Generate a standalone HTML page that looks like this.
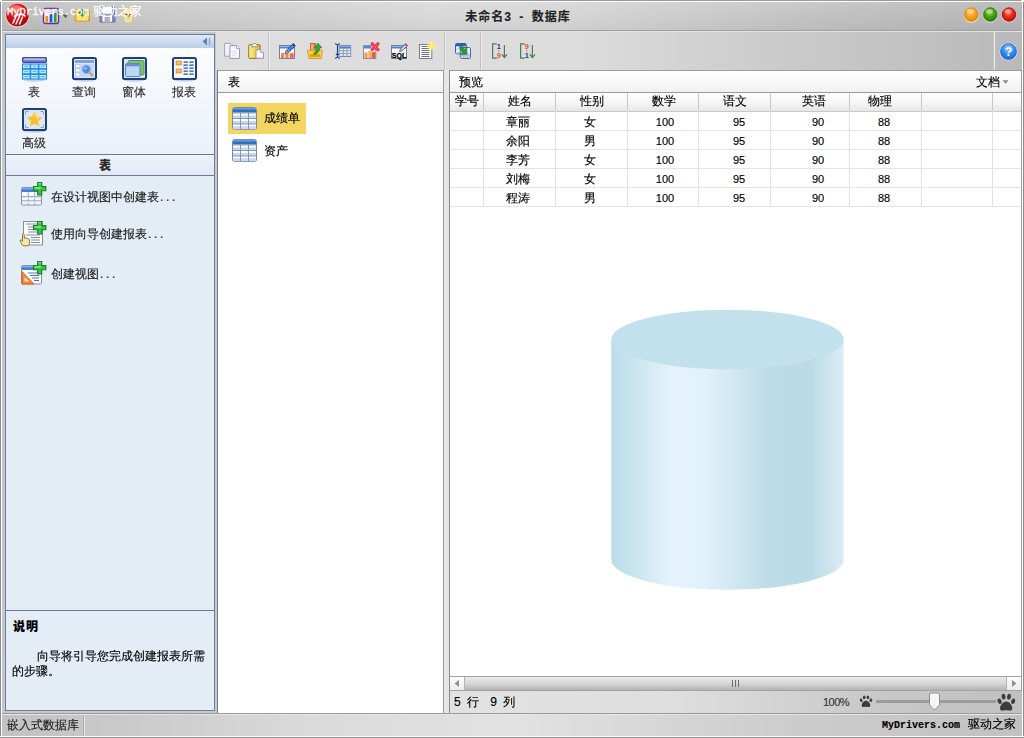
<!DOCTYPE html>
<html lang="zh-CN">
<head>
<meta charset="utf-8">
<title>未命名3 - 数据库</title>
<style>
*{box-sizing:border-box;margin:0;padding:0}
html,body{width:1024px;height:738px;overflow:hidden}
body{position:relative;background:#c4c8d0;font-family:"Liberation Sans","WenQuanYi Zen Hei","Noto Sans CJK SC",sans-serif;font-size:12px;color:#000;line-height:14px;-webkit-text-stroke:.15px currentColor}
.abs{position:absolute}
#titlebar{left:0;top:0;width:1024px;height:32px;background:linear-gradient(rgba(255,255,255,.12),rgba(255,255,255,0) 50%,rgba(0,0,0,.04)),linear-gradient(90deg,#bdbdbd 0,#cacaca 15%,#d9d9d9 42%,#d6d6d6 55%,#c2c2c2 80%,#b6b6b6 100%);border-bottom:1px solid #e4e4e4;box-shadow:inset 0 -1px 0 #9e9e9e}
#title{left:400px;top:8.500px;width:236px;text-align:center;font-weight:bold;font-size:12px;letter-spacing:1px;word-spacing:3px;white-space:pre;color:#222;font-family:"Liberation Sans","Noto Sans CJK SC",sans-serif;line-height:16px}
.tl{width:16px;height:16px;border-radius:50%;top:7px}
#frameL{left:0;top:0;width:2px;height:738px;background:#fff;border-left:1px solid #8c8c8c}
#frameR{left:1022px;top:0;width:2px;height:738px;background:#fff;border-right:1px solid #8c8c8c}
#frameT{left:0;top:0;width:1024px;height:2px;background:#fff;border-top:1px solid #9a9a9a}
#frameB{left:0;top:736px;width:1024px;height:2px;background:#fff;border-bottom:1px solid #8c8c8c}
#toolbar{left:216px;top:32px;width:806px;height:38px;background:linear-gradient(90deg,#dedede 0,#dcdcdc 45%,#cbcbcb 70%,#b9b9b9 100%)}
.tsep{top:32px;height:38px;background:#c2c2c2;border-right:1px solid #ececec;width:2px}
/* left panel */
#lp{left:5px;top:34px;width:210px;height:677px;border:1px solid #707c96;background:#e4edf6}
#lphead{left:0;top:0;width:208px;height:13px;background:linear-gradient(#dfe9f5,#b8cde7)}
#lpicons{left:0;top:13px;width:208px;height:106px;background:linear-gradient(#fbfcfe,#eaf1f9)}
.cat{width:50px;text-align:center;font-size:12px;color:#2e2e2e}
#lpsec{left:0;top:119px;width:208px;height:22px;border-top:1px solid #6c7892;border-bottom:1px solid #6c7892;background:linear-gradient(#eef3fa,#e1e9f5);font-weight:bold;line-height:20px;font-family:'Liberation Sans','Noto Sans CJK SC',sans-serif}
.task{font-size:12px;white-space:nowrap;color:#1a1a1a}
.dots{letter-spacing:2.700px;margin-left:1px}
#lpdesc{left:0;top:575px;width:208px;height:100px;border-top:1px solid #6c7892;background:#e4edf6}
/* middle panel */
#mp{left:217px;top:70px;width:227px;height:643px;background:#fff;border:1px solid #9c9c9c;border-left-color:#777b80;border-bottom:none}
#mphead{left:0;top:0;width:225px;height:22px;border-bottom:1px solid #9b9b9b;background:linear-gradient(#fff,#f1f1f1)}
#sel{left:10px;top:32px;width:78px;height:31px;background:#f3d660}
/* preview */
#pv{left:449px;top:70px;width:573px;height:643px;background:#fff;border:1px solid #9c9c9c;border-left-color:#85888c;border-bottom:none}
#pvhead{left:0;top:0;width:571px;height:22px;border-bottom:1px solid #9b9b9b;background:linear-gradient(#fff,#f1f1f1)}
#grid{left:0;top:22px;width:571px}
.hrow{left:0;top:0;width:571px;height:19px;background:linear-gradient(#fff 0,#f4f4f4 60%,#e6e6e6 100%);border-bottom:1px solid #c9c9c9}
.gl{background:#e2e2e2;width:1px}
.gh{top:0;width:1px;height:18px;background:#c9c9c9;z-index:2}
.hl{background:#e4e4e4;height:1px;left:0;width:571px}
.c{position:absolute;text-align:center;height:19px;line-height:19px;font-size:12px}
#status{left:0;top:713px;width:1024px;height:25px;background:linear-gradient(90deg,#c2c2c2 0,#c8c8c8 10%,#dadada 30%,#e2e2e2 50%,#cecece 75%,#c1c1c1 100%);border-top:1px solid #9a9a9a;box-shadow:inset 0 1px 0 #e6e6e6}
.wm{white-space:nowrap;height:16px;line-height:16px}
.wml{font-family:"Liberation Mono",monospace;font-size:12px;display:inline-block;transform-origin:0 50%;white-space:pre}
.wmc{font-size:12px}
.wmw{-webkit-text-stroke:.3px #fff}
.n{font-family:"Liberation Sans",sans-serif;font-size:11px}
#hsb{left:0;top:605px;width:571px;height:15px;background:#ececec;border-top:1px solid #a2a2a2;border-bottom:1px solid #a2a2a2}
.sbtn{top:0;width:14px;height:13px;background:linear-gradient(#fdfdfd,#ececec)}
#thumb{left:14px;top:0;width:543px;height:13px;background:linear-gradient(#ebebeb,#d6d6d6 50%,#b4b4b4);border-left:1px solid #b4b4b4;border-right:1px solid #b4b4b4}
#info{left:0;top:620px;width:572px;height:22px;background:linear-gradient(90deg,#e2e2e2,#dedede 40%,#c8c8c8 75%,#c0c0c0)}
</style>
</head>
<body>

<div id="titlebar" class="abs"></div>
<div id="title" class="abs">未命名3 - 数据库</div>
<!-- app logo -->
<svg class="abs" style="left:4px;top:1px" width="28" height="28" viewBox="0 0 28 28">
  <defs>
    <radialGradient id="lg1" cx="45%" cy="30%" r="70%"><stop offset="0" stop-color="#ff5a4a"/><stop offset=".45" stop-color="#e0141c"/><stop offset="1" stop-color="#a8060c"/></radialGradient>
  </defs>
  <circle cx="13.5" cy="14.5" r="12.2" fill="#f4d6d2" opacity=".7"/>
  <circle cx="13.5" cy="14" r="11.3" fill="url(#lg1)"/>
  <ellipse cx="11.5" cy="7.5" rx="6.5" ry="3.6" fill="#ff9a8a" opacity=".55"/>
  <path d="M9 22 L13 13 M12 23 L16 14 M15.5 23 L18.5 16 M10.5 15 L17 12.5 L21 15" stroke="#fff" stroke-width="1.5" fill="none" stroke-linecap="round"/>
</svg>
<!-- chart icon -->
<svg class="abs" style="left:42px;top:7px" width="18" height="18" viewBox="0 0 18 18">
  <rect x="1.5" y="1.5" width="15" height="15" rx="2" fill="#f3eef7" stroke="#6b2d8c" stroke-width="1.4"/>
  <rect x="3" y="3" width="12" height="3" fill="#d9c7e6"/>
  <rect x="3.5" y="9" width="2.6" height="6.5" fill="#ef8a1d"/>
  <rect x="7.6" y="7" width="2.8" height="8.5" fill="#2a55d8"/>
  <rect x="11.8" y="6" width="2.8" height="9.5" fill="#25a03c"/>
</svg>
<svg class="abs" style="left:62px;top:14px" width="7" height="5" viewBox="0 0 7 5"><path d="M0.5 0.5h6L3.5 4z" fill="#55624a"/></svg>
<!-- folder -->
<svg class="abs" style="left:74px;top:6px" width="17" height="17" viewBox="0 0 17 17">
  <path d="M1 3.5h5l1.2 1.5H15.5v10H1z" fill="#f6c53a" stroke="#d89a16" stroke-width="1"/>
  <path d="M1.5 7h14l-1.2 8H2.5z" fill="#fbe27a" stroke="#e0a820" stroke-width=".8"/>
  <path d="M6.5 3.5h4v3h2.2L8.5 10.5 4.3 6.5h2.2z" fill="#2f9a2f" stroke="#1c6e1c" stroke-width=".6"/>
</svg>
<!-- save -->
<svg class="abs" style="left:99px;top:5px" width="17" height="18" viewBox="0 0 17 18">
  <path d="M1 1.5h13.5l1.5 1.5v14H1z" fill="#8b89c4" stroke="#6c6aa8" stroke-width="1"/>
  <rect x="3.5" y="1.8" width="9.5" height="6.6" fill="#fff"/>
  <rect x="3.5" y="10.6" width="9.5" height="6" fill="#fff"/>
  <rect x="6" y="12.4" width="4.5" height="3.6" fill="#b9b9c9" stroke="#8a8aa0" stroke-width=".6"/>
</svg>
<!-- customize -->
<svg class="abs" style="left:123px;top:7px" width="11" height="17" viewBox="0 0 11 17">
  <rect x=".8" y=".8" width="9" height="15.2" rx="4.5" fill="#f4ecb4" stroke="#d8c66a" stroke-width="1"/>
  <path d="M2.6 7.2l2.7 2.3 2.7-2.3" stroke="#6a3d1a" stroke-width="1.6" fill="none"/>
  <path d="M2.6 10.6l2.7 2.3 2.7-2.3" stroke="#e2d27e" stroke-width="1.2" fill="none"/>
</svg>
<div class="abs wm wmw" style="left:6.500px;top:3px;color:#fff"><span class="wml" style="transform:scaleX(.955);width:87px;font-size:11px">MyDrivers.com </span><span class="wmc">驱动之家</span></div>
<!-- traffic lights -->
<svg class="abs" style="left:961px;top:5px" width="58" height="20" viewBox="0 0 58 20">
  <defs>
    <radialGradient id="tlo" cx="45%" cy="35%" r="65%"><stop offset="0" stop-color="#ffd27a"/><stop offset=".5" stop-color="#fba21c"/><stop offset="1" stop-color="#e58406"/></radialGradient>
    <radialGradient id="tlg" cx="45%" cy="35%" r="65%"><stop offset="0" stop-color="#a6e05a"/><stop offset=".5" stop-color="#46a412"/><stop offset="1" stop-color="#2c7d08"/></radialGradient>
    <radialGradient id="tlr" cx="45%" cy="35%" r="65%"><stop offset="0" stop-color="#ff8a7a"/><stop offset=".5" stop-color="#ee2a1c"/><stop offset="1" stop-color="#c40c08"/></radialGradient>
  </defs>
  <circle cx="10.300" cy="10.200" r="7.700" fill="#f6dcb4" opacity=".8"/><circle cx="10.300" cy="9.500" r="6.700" fill="url(#tlo)" stroke="#c98222" stroke-width=".9"/><ellipse cx="9.300" cy="6.300" rx="3.600" ry="2.200" fill="#fff" opacity=".35"/>
  <circle cx="29.300" cy="10.200" r="7.700" fill="#cfe0bc" opacity=".8"/><circle cx="29.300" cy="9.500" r="6.700" fill="url(#tlg)" stroke="#35701a" stroke-width=".9"/><ellipse cx="28.300" cy="6.300" rx="3.600" ry="2.200" fill="#fff" opacity=".35"/>
  <circle cx="48" cy="10.200" r="7.700" fill="#f2c4be" opacity=".8"/><circle cx="48" cy="9.500" r="6.700" fill="url(#tlr)" stroke="#8e1c12" stroke-width=".9"/><ellipse cx="47" cy="6.300" rx="3.600" ry="2.200" fill="#fff" opacity=".35"/>
</svg>
<div id="toolbar" class="abs"></div>
<div class="abs tsep" style="left:268px"></div>
<div class="abs tsep" style="left:444px"></div>
<div class="abs tsep" style="left:480px"></div>
<div class="abs tsep" style="left:993px"></div>
<svg class="abs" style="left:224px;top:43px;overflow:visible" width="16" height="16" viewBox="0 0 16 16"><path d="M.6 .4h6.200l1.400 1.400v11.400H.6z" fill="#f1f1fa" stroke="#a3a3c0" stroke-width="1"/><path d="M5.900 2.600h6.600l3 3v9.800H5.900z" fill="#f8f8fd" stroke="#9898b8" stroke-width="1"/><path d="M12.500 2.600v3h3" fill="#fff" stroke="#9898b8" stroke-width=".9"/><path d="M8 9l4-1.500M8 11l5-1.500M8 13l4-1" stroke="#dcdcea" stroke-width="1"/></svg>
<svg class="abs" style="left:248px;top:43px;overflow:visible" width="16" height="16" viewBox="0 0 16 16"><defs><linearGradient id="pg" x1="0" x2="1"><stop offset="0" stop-color="#fbf0a0"/><stop offset=".6" stop-color="#f2d040"/><stop offset="1" stop-color="#e0b020"/></linearGradient></defs><rect x=".7" y="1.600" width="11.500" height="13.800" rx="1.300" fill="url(#pg)" stroke="#8f7c22" stroke-width="1"/><path d="M3.600 3.800c0-2 1-3.400 2.900-3.400s2.900 1.400 2.900 3.400z" fill="#efeff4" stroke="#8a8a9c" stroke-width=".9"/><path d="M8 6.800h4.800l2.700 2.700v5.800H8z" fill="#f8f8fd" stroke="#9494b4" stroke-width="1"/><path d="M12.800 6.800v2.700h2.700" fill="#fff" stroke="#9494b4" stroke-width=".9"/></svg>
<svg class="abs" style="left:279px;top:43px;overflow:visible" width="16" height="16" viewBox="0 0 16 16"><rect x=".5" y="2.500" width="15" height="13" fill="#fff" stroke="#70809e" stroke-width="1"/><rect x="1" y="3" width="14" height="2.500" fill="#4a86d8"/><rect x="1" y="3" width="14" height="1" fill="#86b6ee"/><rect x="2" y="9.800" width="3.200" height="5.400" fill="#f0805a"/><rect x="6.400" y="11" width="3.200" height="4.200" fill="#f0805a"/><rect x="10.800" y="9.800" width="3.800" height="5.400" fill="#ee6a4a"/><rect x="2" y="9.800" width="12.600" height="1" fill="#f7b49a" opacity=".6"/><path d="M6.300 10.600l.9-3 7-7 2.100 2.100-7 7z" fill="#3f8ce6" stroke="#23458e" stroke-width=".9"/><path d="M8.300 6.500l1.900 1.900" stroke="#9fd0ff" stroke-width=".8"/><path d="M13.300 1.500l2.100 2.100 .9-.9-2.100-2.100z" fill="#3a2a52"/><path d="M6.300 10.600l.9-3 2.100 2.100z" fill="#f4e4b0" stroke="#6a4a2a" stroke-width=".6"/></svg>
<svg class="abs" style="left:307px;top:43px;overflow:visible" width="16" height="16" viewBox="0 0 16 16"><rect x="3.600" y=".5" width="4.700" height="7.500" fill="#f08a62" stroke="#d0583a" stroke-width="1"/><rect x="4.300" y="1.200" width="1.400" height="6" fill="#f9c0a6"/><path d="M.4 7.300h15.200l-1.400 8.200H1.900z" fill="#f8d23a" stroke="#e8943a" stroke-width="1"/><rect x="3" y="11.200" width="10" height="2.600" fill="#d8a210"/><path d="M11 .2l3.800 4.600h-2.300c0 3.300-1.700 5.400-4.600 6.900l-1.400-1.500c2.300-1.200 3.200-2.800 3.200-5.400H7.300z" fill="#2fb02f" stroke="#1c7a1c" stroke-width=".7"/></svg>
<svg class="abs" style="left:335px;top:43px;overflow:visible" width="16" height="16" viewBox="0 0 16 16"><rect x="4.300" y="2.500" width="11.400" height="11" fill="#f2f6fc" stroke="#808aa4" stroke-width="1"/><rect x="4.800" y="3" width="10.400" height="2.600" fill="#3f80d4"/><rect x="4.800" y="3" width="10.400" height="1" fill="#7fb2ee"/><rect x="4.800" y="8" width="10.400" height="2" fill="#dbe6f6"/><rect x="4.800" y="11.300" width="10.400" height="1.700" fill="#dbe6f6"/><path d="M4.800 7.600h10.400M4.800 10.600h10.400M8.300 5.600v7.900M11.900 5.600v7.900" stroke="#8c94aa" stroke-width=".9"/><path d="M.2 .6l2.300 1.300L4.800 .6M.2 15.400l2.300-1.300 2.300 1.300M2.500 1.900v12.200M.8 11.300h3.400" stroke="#23408c" stroke-width="1.200" fill="none"/></svg>
<svg class="abs" style="left:363px;top:43px;overflow:visible" width="16" height="16" viewBox="0 0 16 16"><rect x=".5" y="2.600" width="12.300" height="12.900" fill="#fff" stroke="#808aa4" stroke-width="1"/><rect x="1" y="3.100" width="7.500" height="2.400" fill="#4a86d8"/><rect x="1.400" y="9.500" width="3" height="5.600" fill="#f4923a"/><rect x="4.900" y="7.800" width="3" height="7.300" fill="#f7a64a"/><rect x="8.600" y="9" width="3.700" height="6.100" fill="#ee5a3a"/><rect x="1.400" y="9.500" width="1" height="5.600" fill="#fbc890"/><rect x="4.900" y="7.800" width="1" height="7.300" fill="#fcd6a0"/><path d="M9.200 .8l5.800 5.800M15 .8L9.200 6.600" stroke="#ee2e42" stroke-width="3.200" stroke-linecap="round"/><path d="M9.200 .8l5.800 5.800M15 .8L9.200 6.600" stroke="#f86a72" stroke-width="1" stroke-linecap="round"/></svg>
<svg class="abs" style="left:391px;top:43px;overflow:visible" width="16" height="16" viewBox="0 0 16 16"><rect x=".5" y="2.500" width="15" height="13" fill="#fff" stroke="#70809e" stroke-width="1"/><rect x="1" y="3" width="14" height="2.500" fill="#4a86d8"/><rect x="1" y="3" width="14" height="1" fill="#86b6ee"/><text x=".8" y="15" font-family="Liberation Sans,sans-serif" font-weight="bold" font-size="7" fill="#000" stroke="#000" stroke-width=".3" textLength="14.400" lengthAdjust="spacingAndGlyphs">SQL</text><path d="M8.800 8.300l.8-2.600 5-5 1.800 1.800-5 5z" fill="#cfdcf2" stroke="#34448a" stroke-width=".8"/><path d="M13.800 1.500l1.800 1.800 .8-.8L14.600 .7z" fill="#c8283a"/><path d="M8.800 8.300l.8-2.600 1.800 1.800z" fill="#f4e4b0" stroke="#5a4a3a" stroke-width=".5"/></svg>
<svg class="abs" style="left:419px;top:43px;overflow:visible" width="16" height="16" viewBox="0 0 16 16"><rect x=".5" y="1.500" width="12.300" height="14" fill="#fbfbfb" stroke="#7c7c88" stroke-width="1"/><path d="M2.500 3.500h8M2.500 5.500h8M2.500 7.500h8M2.500 9.500h8M2.500 11.500h8M2.500 13.500h8" stroke="#70707c" stroke-width="1"/><circle cx="12.300" cy="3" r="4.300" fill="#fff27a" opacity=".55"/><circle cx="12.300" cy="3" r="2.600" fill="#ffea30" opacity=".9"/><path d="M12.300 -.8v7.600M8.500 3h7.600" stroke="#fff6a0" stroke-width=".8" opacity=".9"/></svg>
<svg class="abs" style="left:455px;top:43px;overflow:visible" width="16" height="16" viewBox="0 0 16 16"><rect x=".5" y=".5" width="10.800" height="10.300" rx="1.200" fill="#eef4fc" stroke="#3a5aa6" stroke-width="1"/><rect x="1" y="1" width="9.800" height="2.400" fill="#2f5fb4"/><rect x="1" y="5.200" width="9.800" height="1.800" fill="#c2d8f2"/><rect x="1" y="8.600" width="9.800" height="1.700" fill="#c2d8f2"/><rect x="5.300" y="4.500" width="10.200" height="11" rx="1.200" fill="#e8eef9" stroke="#5a62ac" stroke-width="1"/><rect x="5.800" y="10.400" width="9.200" height="1.800" fill="#c6d6f0"/><rect x="5.800" y="13.600" width="9.200" height="1.400" fill="#c6d6f0"/><path d="M8.800 9.500v6M12.200 9.500v6M5.800 12.800h9.200" stroke="#98a4cc" stroke-width=".8"/><path d="M4.300 4.400l2.200-1.600 3.400 3.600 1.900-1.800v6.700H5.300l2-2z" fill="#1fa030" stroke="#0c6c1c" stroke-width=".6"/></svg>
<svg class="abs" style="left:491px;top:43px;overflow:visible" width="16" height="16" viewBox="0 0 16 16"><path d="M5.800 .9H1.600v14.300h4.200" fill="none" stroke="#4c7c5c" stroke-width="1.200"/><text x="5.700" y="6" font-family="Liberation Sans,sans-serif" font-weight="bold" font-size="7.400" fill="#2a3f8a">1</text><text x="5.700" y="15.400" font-family="Liberation Sans,sans-serif" font-weight="bold" font-size="7.400" fill="#e2562a">9</text><rect x="7.200" y="7.200" width="1.100" height="1.200" fill="#8c6c5c"/><path d="M13.400 2v12.300M10.800 11.300l2.600 3.200 2.600-3.200" fill="none" stroke="#4c7c5c" stroke-width="1.200"/></svg>
<svg class="abs" style="left:519px;top:43px;overflow:visible" width="16" height="16" viewBox="0 0 16 16"><path d="M5.800 .9H1.600v14.300h4.200" fill="none" stroke="#4c7c5c" stroke-width="1.200"/><text x="5.700" y="6" font-family="Liberation Sans,sans-serif" font-weight="bold" font-size="7.400" fill="#e2562a">9</text><text x="5.700" y="15.400" font-family="Liberation Sans,sans-serif" font-weight="bold" font-size="7.400" fill="#2a3f8a">1</text><rect x="7.200" y="7.200" width="1.100" height="1.200" fill="#8c6c5c"/><path d="M13.400 2v12.300M10.800 11.300l2.600 3.200 2.600-3.200" fill="none" stroke="#4c7c5c" stroke-width="1.200"/></svg>
<svg class="abs" style="left:999px;top:42px" width="19" height="19" viewBox="0 0 19 19"><defs><radialGradient id="hg" cx="50%" cy="30%" r="75%"><stop offset="0" stop-color="#8fd0ff"/><stop offset=".55" stop-color="#2f86ea"/><stop offset="1" stop-color="#1a5ac8"/></radialGradient></defs><circle cx="9.500" cy="9.500" r="9" fill="#dcecff"/><circle cx="9.500" cy="9.500" r="8" fill="url(#hg)" stroke="#2a6ad0" stroke-width=".8"/><text x="9.500" y="14" text-anchor="middle" font-family="Liberation Sans,sans-serif" font-weight="bold" font-size="12.500" fill="#fff">?</text></svg>
<div id="lp" class="abs">
  <div id="lphead" class="abs"></div>
  <div id="lpicons" class="abs"></div>
<svg class="abs" style="left:196px;top:2px" width="9" height="9" viewBox="0 0 9 9"><path d="M5 .5v8L.5 4.500z" fill="#5f7fae"/><path d="M7.500 .8v7.400" stroke="#8fa6c8" stroke-width="1.400"/></svg>
<svg class="abs" style="left:15px;top:20px" width="27" height="27" viewBox="-1 -1 27 27"><ellipse cx="12.500" cy="24.300" rx="10.500" ry="1.500" fill="#8ea6d0" opacity=".5"/><rect x=".600" y="1.600" width="23.800" height="4.800" rx="1" fill="#7a84d4" stroke="#3f49a2" stroke-width="1.200"/><rect x="2" y="2.500" width="21" height="1.300" fill="#c5ccf2"/><rect x="0.5" y="8.0" width="7.600" height="4.600" fill="#c4ebfc" stroke="#1f8ae4" stroke-width="1.100"/><rect x="2.3" y="9.6" width="4" height="1.200" fill="#58b4ee"/><rect x="8.7" y="8.0" width="7.600" height="4.600" fill="#c4ebfc" stroke="#1f8ae4" stroke-width="1.100"/><rect x="10.5" y="9.6" width="4" height="1.200" fill="#58b4ee"/><rect x="16.9" y="8.0" width="7.600" height="4.600" fill="#c4ebfc" stroke="#1f8ae4" stroke-width="1.100"/><rect x="18.7" y="9.6" width="4" height="1.200" fill="#58b4ee"/><rect x="0.5" y="13.2" width="7.600" height="4.600" fill="#c4ebfc" stroke="#1f8ae4" stroke-width="1.100"/><rect x="2.3" y="14.8" width="4" height="1.200" fill="#58b4ee"/><rect x="8.7" y="13.2" width="7.600" height="4.600" fill="#c4ebfc" stroke="#1f8ae4" stroke-width="1.100"/><rect x="10.5" y="14.8" width="4" height="1.200" fill="#58b4ee"/><rect x="16.9" y="13.2" width="7.600" height="4.600" fill="#c4ebfc" stroke="#1f8ae4" stroke-width="1.100"/><rect x="18.7" y="14.8" width="4" height="1.200" fill="#58b4ee"/><rect x="0.5" y="18.4" width="7.600" height="4.600" fill="#c4ebfc" stroke="#1f8ae4" stroke-width="1.100"/><rect x="2.3" y="20.0" width="4" height="1.200" fill="#58b4ee"/><rect x="8.7" y="18.4" width="7.600" height="4.600" fill="#c4ebfc" stroke="#1f8ae4" stroke-width="1.100"/><rect x="10.5" y="20.0" width="4" height="1.200" fill="#58b4ee"/><rect x="16.9" y="18.4" width="7.600" height="4.600" fill="#c4ebfc" stroke="#1f8ae4" stroke-width="1.100"/><rect x="18.7" y="20.0" width="4" height="1.200" fill="#58b4ee"/></svg>
<svg class="abs" style="left:65px;top:20px" width="27" height="27" viewBox="-1 -1 27 27"><ellipse cx="12.500" cy="24.300" rx="10.500" ry="1.500" fill="#8ea6d0" opacity=".5"/><rect x="1" y="2" width="23" height="21" rx="1.800" fill="#dbe9fb" stroke="#1f3f7c" stroke-width="2"/><rect x="3" y="4" width="19" height="3" fill="#7fa2d8"/><rect x="3.500" y="8.500" width="4.500" height="3.300" fill="#f4f8ff" stroke="#9ab4de" stroke-width=".6"/><rect x="3.500" y="12.700" width="4.500" height="3.300" fill="#f4f8ff" stroke="#9ab4de" stroke-width=".6"/><rect x="3.500" y="16.900" width="4.500" height="3.300" fill="#f4f8ff" stroke="#9ab4de" stroke-width=".6"/><rect x="9" y="8" width="13" height="13" fill="#c2daf6"/><circle cx="14.300" cy="13.300" r="4.300" fill="#5f86e6" stroke="#9fc0f4" stroke-width="1"/><circle cx="13.300" cy="12.300" r="1.800" fill="#8fb0f2"/><path d="M17.500 16.500l3 3" stroke="#c9a26a" stroke-width="2.400" stroke-linecap="round"/></svg>
<svg class="abs" style="left:115px;top:20px" width="27" height="27" viewBox="-1 -1 27 27"><ellipse cx="12.500" cy="24.300" rx="10.500" ry="1.500" fill="#8ea6d0" opacity=".5"/><rect x="1" y="2" width="23" height="21" rx="1.800" fill="#dbe9fb" stroke="#1f3f7c" stroke-width="2"/><rect x="6" y="4.500" width="16" height="14.500" rx="1.500" fill="#7cc46a" stroke="#4e9a48" stroke-width="1"/><rect x="3.500" y="7.500" width="14.500" height="13" rx="1" fill="#a9cdf0" stroke="#5f86c0" stroke-width="1"/><rect x="4" y="8" width="13.500" height="2.200" fill="#6f8fd0"/><rect x="4.500" y="11" width="12.500" height="9" fill="#b9d8f6"/></svg>
<svg class="abs" style="left:165px;top:20px" width="27" height="27" viewBox="-1 -1 27 27"><ellipse cx="12.500" cy="24.300" rx="10.500" ry="1.500" fill="#8ea6d0" opacity=".5"/><rect x="1" y="2" width="23" height="21" rx="1.800" fill="#f4f8fd" stroke="#1f3f7c" stroke-width="2"/><rect x="11.500" y="5.4" width="4.300" height="1.500" fill="#3f6fb0"/><rect x="17.300" y="5.4" width="4.300" height="1.500" fill="#3f6fb0"/><rect x="11.500" y="8.4" width="4.300" height="1.500" fill="#3f6fb0"/><rect x="17.300" y="8.4" width="4.300" height="1.500" fill="#3f6fb0"/><rect x="11.500" y="11.4" width="4.300" height="1.500" fill="#3f6fb0"/><rect x="17.300" y="11.4" width="4.300" height="1.500" fill="#3f6fb0"/><rect x="11.500" y="14.4" width="4.300" height="1.500" fill="#3f6fb0"/><rect x="17.300" y="14.4" width="4.300" height="1.500" fill="#3f6fb0"/><rect x="11.500" y="17.4" width="4.300" height="1.500" fill="#3f6fb0"/><rect x="17.300" y="17.4" width="4.300" height="1.500" fill="#3f6fb0"/><rect x="4" y="5" width="5.500" height="4" fill="#f6a63a" stroke="#e0862a" stroke-width=".6"/><rect x="4" y="13" width="5.500" height="4" fill="#f6a63a" stroke="#e0862a" stroke-width=".6"/><rect x="5" y="6" width="3.500" height="1.300" fill="#fbd28a"/><rect x="5" y="14" width="3.500" height="1.300" fill="#fbd28a"/></svg>
<svg class="abs" style="left:15px;top:71px" width="27" height="27" viewBox="-1 -1 27 27"><ellipse cx="12.500" cy="24.300" rx="10.500" ry="1.500" fill="#8ea6d0" opacity=".5"/><rect x="1" y="2" width="23" height="21" rx="1.800" fill="#dbe6fa" stroke="#1f3f7c" stroke-width="2"/><path d="M3.500 7.500v-3h3M21.500 7.500v-3h-3M3.500 17.500v3h3M21.500 17.500v3h-3" fill="none" stroke="#6ab07a" stroke-width=".9"/><path d="M12.500 4.600l2.400 4.900 5.400.8-3.900 3.800.9 5.400-4.800-2.600-4.800 2.600.9-5.400-3.900-3.800 5.400-.8z" fill="#f7c02a" stroke="#f4dc8a" stroke-width=".9"/><path d="M12.500 7l1.400 3 3 .4-2.200 2.100" fill="none" stroke="#fde9a0" stroke-width="1" opacity=".8"/></svg>
<div class="abs cat" style="left:3px;top:50px">表</div>
<div class="abs cat" style="left:53px;top:50px">查询</div>
<div class="abs cat" style="left:103px;top:50px">窗体</div>
<div class="abs cat" style="left:153px;top:50px">报表</div>
<div class="abs cat" style="left:3px;top:101px">高级</div>
  <div id="lpsec" class="abs"><b class="abs" style="left:93px;top:1px;color:#2a2a2a">表</b></div>
<svg class="abs" style="left:14px;top:146px" width="28" height="26" viewBox="0 0 28 26"><rect x="1.500" y="6.500" width="20" height="17.500" rx="1" fill="#fbfcff" stroke="#8a8fa6"/><rect x="2" y="7" width="19" height="4" fill="#3f82d6"/><rect x="2" y="7" width="19" height="1.300" fill="#7fb2ee"/><path d="M2 15.500h19M2 19.700h19M8.300 11v13M14.700 11v13" stroke="#9a9fb4" stroke-width=".9"/><rect x="2" y="16" width="19" height="1.500" fill="#dfe8f8"/><rect x="2" y="20.200" width="19" height="1.500" fill="#dfe8f8"/><path d="M17.65 1.55h4.100v4.100h4.100v4.100h-4.100v4.100h-4.100v-4.100h-4.100v-4.100h4.100z" fill="#35c444" stroke="#1a7d28" stroke-width="1.100"/><path d="M18.55 2.75h2.300M14.45 6.85h6.500" fill="none" stroke="#b4f4b0" stroke-width="1.100" opacity=".9"/></svg>
<svg class="abs" style="left:13px;top:185px" width="29" height="27" viewBox="0 0 29 27"><rect x="4.500" y="1.500" width="19" height="23.500" fill="#fdfdfd" stroke="#8a8a94"/><path d="M7 4h12M9 7h9M9 9.500h9M9 12h9M7 15h14M12 17.500h9M12 20h9M12 22.500h9" stroke="#7f8aa8" stroke-width="1"/><path d="M3.500 14.500c0-1.200 1.800-1.200 1.800 0v4l.8-.6c.6-.5 1.500 0 1.500.6 .6-.5 1.500 0 1.500.6 .7-.3 1.400.1 1.400.9v3.200c0 1.700-1.200 2.600-2.800 2.600h-2.400c-1.400 0-2.300-.9-2.900-2.200l-1.200-2.600c-.4-1 .7-1.600 1.400-.8l.9 1z" fill="#f6e7a6" stroke="#6a5a2a" stroke-width=".8"/><path d="M18.65 1.55h4.100v4.100h4.100v4.100h-4.100v4.100h-4.100v-4.100h-4.100v-4.100h4.100z" fill="#35c444" stroke="#1a7d28" stroke-width="1.100"/><path d="M19.55 2.75h2.300M15.45 6.85h6.500" fill="none" stroke="#b4f4b0" stroke-width="1.100" opacity=".9"/></svg>
<svg class="abs" style="left:14px;top:225px" width="28" height="26" viewBox="0 0 28 26"><rect x="1.500" y="5.500" width="20" height="18.500" rx="1" fill="#fbfcff" stroke="#8a8fa6"/><rect x="2" y="6" width="19" height="4" fill="#3f82d6"/><rect x="2" y="6" width="19" height="1.300" fill="#7fb2ee"/><path d="M8 13h11M10 15.500h9M12 18h7M14 20.500h5" stroke="#5f6fa6" stroke-width="1"/><path d="M2 11.500v12.500h12z" fill="#ee8a3a" stroke="#c8641c" stroke-width=".9"/><path d="M4.500 17v4.500h5z" fill="#fbd9a6"/><path d="M17.65 1.55h4.100v4.100h4.100v4.100h-4.100v4.100h-4.100v-4.100h-4.100v-4.100h4.100z" fill="#35c444" stroke="#1a7d28" stroke-width="1.100"/><path d="M18.55 2.75h2.300M14.45 6.85h6.500" fill="none" stroke="#b4f4b0" stroke-width="1.100" opacity=".9"/></svg>
<div class="abs task" style="left:45px;top:155px">在设计视图中创建表<span class="dots">...</span></div>
<div class="abs task" style="left:45px;top:192px">使用向导创建报表<span class="dots">...</span></div>
<div class="abs task" style="left:45px;top:232px">创建视图<span class="dots">...</span></div>
  <div id="lpdesc" class="abs">
    <div class="abs" style="left:7px;top:9px;font-weight:bold;font-family:'Liberation Sans','Noto Sans CJK SC',sans-serif;font-size:12px;letter-spacing:1px"><b>说明</b></div>
    <div class="abs" style="left:6px;top:38px;width:198px;line-height:15px;text-indent:25px">向导将引导您完成创建报表所需的步骤。</div>
  </div>
</div>
<div id="mp" class="abs"><div id="mphead" class="abs"><span class="abs" style="left:10px;top:4px">表</span></div><div id="sel" class="abs"></div>
<svg class="abs" style="left:14px;top:36px" width="25" height="23" viewBox="0 0 25 23"><rect x=".5" y=".5" width="24" height="22" rx="2" fill="#fff" stroke="#7f869c"/><path d="M1 5.500V2.500a1.500 1.500 0 0 1 1.500-1.500h20a1.500 1.500 0 0 1 1.500 1.500v3z" fill="#2f6fc0"/><rect x="1" y="1" width="23" height="1.600" fill="#5fa0e6" rx="1"/><rect x="1" y="8.5" width="23" height="3" fill="#c3d9f4"/><rect x="1" y="13.9" width="23" height="3" fill="#c3d9f4"/><rect x="1" y="19.3" width="23" height="3" fill="#c3d9f4"/><path d="M1 11.500h23M1 17h23M8.500 6v16.500M16.500 6v16.500" stroke="#8f93a8" stroke-width="1"/><path d="M1 6h23" stroke="#6f7fa8" stroke-width=".8"/></svg>
<svg class="abs" style="left:14px;top:68px" width="25" height="23" viewBox="0 0 25 23"><rect x=".5" y=".5" width="24" height="22" rx="2" fill="#fff" stroke="#7f869c"/><path d="M1 5.500V2.500a1.500 1.500 0 0 1 1.500-1.500h20a1.500 1.500 0 0 1 1.500 1.500v3z" fill="#2f6fc0"/><rect x="1" y="1" width="23" height="1.600" fill="#5fa0e6" rx="1"/><rect x="1" y="8.5" width="23" height="3" fill="#c3d9f4"/><rect x="1" y="13.9" width="23" height="3" fill="#c3d9f4"/><rect x="1" y="19.3" width="23" height="3" fill="#c3d9f4"/><path d="M1 11.500h23M1 17h23M8.500 6v16.500M16.500 6v16.500" stroke="#8f93a8" stroke-width="1"/><path d="M1 6h23" stroke="#6f7fa8" stroke-width=".8"/></svg>
<div class="abs" style="left:46px;top:40px">成绩单</div>
<div class="abs" style="left:46px;top:73px">资产</div>
</div>
<div id="pv" class="abs"><div id="pvhead" class="abs"><span class="abs" style="left:9px;top:4px">预览</span><span class="abs" style="left:526px;top:4px">文档</span><svg class="abs" style="left:552px;top:9px" width="7" height="4" viewBox="0 0 7 4"><path d="M.5 .3h6L3.500 3.700z" fill="#8a8a8a"/></svg></div>
<div id="grid" class="abs">
<div class="abs hrow"></div>
<div class="abs gh" style="left:33px"></div><div class="abs gh" style="left:105px"></div><div class="abs gh" style="left:177px"></div><div class="abs gh" style="left:248px"></div><div class="abs gh" style="left:320px"></div><div class="abs gh" style="left:399px"></div><div class="abs gh" style="left:471px"></div><div class="abs gh" style="left:542px"></div>
<div class="abs gl" style="left:33px;top:0;height:113px"></div>
<div class="abs gl" style="left:105px;top:0;height:113px"></div>
<div class="abs gl" style="left:177px;top:0;height:113px"></div>
<div class="abs gl" style="left:248px;top:0;height:113px"></div>
<div class="abs gl" style="left:320px;top:0;height:113px"></div>
<div class="abs gl" style="left:399px;top:0;height:113px"></div>
<div class="abs gl" style="left:471px;top:0;height:113px"></div>
<div class="abs gl" style="left:542px;top:0;height:113px"></div>
<div class="abs hl" style="top:37px"></div>
<div class="abs hl" style="top:56px"></div>
<div class="abs hl" style="top:75px"></div>
<div class="abs hl" style="top:94px"></div>
<div class="abs hl" style="top:113px"></div>
<div class="c" style="left:-13px;width:60px;top:-1px">学号</div>
<div class="c" style="left:40px;width:60px;top:-1px">姓名</div>
<div class="c" style="left:112px;width:60px;top:-1px">性别</div>
<div class="c" style="left:184px;width:60px;top:-1px">数学</div>
<div class="c" style="left:255px;width:60px;top:-1px">语文</div>
<div class="c" style="left:334px;width:60px;top:-1px">英语</div>
<div class="c" style="left:400px;width:60px;top:-1px">物理</div>
<div class="c" style="left:38px;width:60px;top:20px">章丽</div><div class="c" style="left:110px;width:60px;top:20px">女</div><div class="c n" style="left:185px;width:60px;top:20px">100</div><div class="c n" style="left:259px;width:60px;top:20px">95</div><div class="c n" style="left:338px;width:60px;top:20px">90</div><div class="c n" style="left:404px;width:60px;top:20px">88</div>
<div class="c" style="left:38px;width:60px;top:39px">余阳</div><div class="c" style="left:110px;width:60px;top:39px">男</div><div class="c n" style="left:185px;width:60px;top:39px">100</div><div class="c n" style="left:259px;width:60px;top:39px">95</div><div class="c n" style="left:338px;width:60px;top:39px">90</div><div class="c n" style="left:404px;width:60px;top:39px">88</div>
<div class="c" style="left:38px;width:60px;top:58px">李芳</div><div class="c" style="left:110px;width:60px;top:58px">女</div><div class="c n" style="left:185px;width:60px;top:58px">100</div><div class="c n" style="left:259px;width:60px;top:58px">95</div><div class="c n" style="left:338px;width:60px;top:58px">90</div><div class="c n" style="left:404px;width:60px;top:58px">88</div>
<div class="c" style="left:38px;width:60px;top:77px">刘梅</div><div class="c" style="left:110px;width:60px;top:77px">女</div><div class="c n" style="left:185px;width:60px;top:77px">100</div><div class="c n" style="left:259px;width:60px;top:77px">95</div><div class="c n" style="left:338px;width:60px;top:77px">90</div><div class="c n" style="left:404px;width:60px;top:77px">88</div>
<div class="c" style="left:38px;width:60px;top:96px">程涛</div><div class="c" style="left:110px;width:60px;top:96px">男</div><div class="c n" style="left:185px;width:60px;top:96px">100</div><div class="c n" style="left:259px;width:60px;top:96px">95</div><div class="c n" style="left:338px;width:60px;top:96px">90</div><div class="c n" style="left:404px;width:60px;top:96px">88</div>
</div>
<svg class="abs" style="left:150px;top:230px" width="260" height="300" viewBox="600 300 260 300">
<defs><linearGradient id="cyl" x1="0" x2="1" y1="0" y2="0"><stop offset="0" stop-color="#bbdce8"/><stop offset=".08" stop-color="#c6e3ee"/><stop offset=".26" stop-color="#e5f3fb"/><stop offset=".4" stop-color="#e1f1fa"/><stop offset=".55" stop-color="#cee6f1"/><stop offset=".68" stop-color="#bcdce7"/><stop offset=".86" stop-color="#badbe6"/><stop offset=".95" stop-color="#cfe6f0"/><stop offset="1" stop-color="#dbecf4"/></linearGradient></defs>
<path d="M611.300 338.500V558.700a116.200 30 0 0 0 232.400 0V338.500z" fill="url(#cyl)"/>
<ellipse cx="727.500" cy="338.500" rx="116.200" ry="29.800" fill="#c3e1ed"/>
</svg>
<div id="hsb" class="abs"><div class="abs sbtn" style="left:0"><svg width="14" height="13" viewBox="0 0 14 13"><path d="M9 3v7L4.500 6.500z" fill="#8f8f8f"/></svg></div><div id="thumb" class="abs"><svg class="abs" style="left:266px;top:3px" width="9" height="7" viewBox="0 0 9 7"><path d="M1.500 0v7M4.500 0v7M7.500 0v7" stroke="#6f6f6f" stroke-width="1"/></svg></div><div class="abs sbtn" style="left:557px"><svg width="14" height="13" viewBox="0 0 14 13"><path d="M5 3v7l4.500-3.500z" fill="#8f8f8f"/></svg></div></div>
<div id="info" class="abs"><span class="abs" style="left:4px;top:4px;white-space:pre;letter-spacing:1.500px">5 行  9 列</span><span class="abs n" style="left:373px;top:4px;font-size:11px;letter-spacing:-.5px;color:#333">100%</span>
<svg class="abs" style="left:408px;top:1px" width="160" height="20" viewBox="858 692 160 20">
<g fill="#3c3c3c"><path d="M866 700.800c2.300 0 4.300 2.800 4.300 4.600 0 1.500-1.300 1.900-2.300 1.600-1.300-.4-2.700-.4-4 0-1 .3-2.300-.1-2.300-1.600 0-1.800 2-4.600 4.300-4.600z"/><ellipse cx="861.200" cy="700.300" rx="1.300" ry="1.800" transform="rotate(-20 861.200 700.300)"/><ellipse cx="864.200" cy="697.300" rx="1.300" ry="1.900"/><ellipse cx="867.900" cy="697.300" rx="1.300" ry="1.900"/><ellipse cx="870.900" cy="700.300" rx="1.300" ry="1.800" transform="rotate(20 870.900 700.300)"/>
<path d="M1006.200 701.500c3.400 0 6.200 4.200 6.200 6.800 0 2.200-1.900 2.800-3.400 2.300-1.800-.6-3.800-.6-5.600 0-1.500.5-3.400-.1-3.400-2.300 0-2.600 2.800-6.800 6.200-6.800z"/><ellipse cx="999.600" cy="701.300" rx="1.900" ry="2.800" transform="rotate(-22 999.600 701.300)"/><ellipse cx="1003.600" cy="696.700" rx="1.900" ry="2.900" transform="rotate(-6 1003.600 696.700)"/><ellipse cx="1009" cy="696.700" rx="1.900" ry="2.900" transform="rotate(6 1009 696.700)"/><ellipse cx="1013.200" cy="701.300" rx="1.900" ry="2.800" transform="rotate(22 1013.200 701.300)"/></g>
<rect x="876" y="700" width="120" height="3" fill="#9c9c9c"/>
<path d="M929.500 694.500a1.500 1.500 0 0 1 1.500-1.500h7a1.500 1.500 0 0 1 1.500 1.500v10.500l-5 5-5-5z" fill="#f6f6f6" stroke="#8e8e8e"/>
</svg></div>
</div>
<div class="abs" style="left:444px;top:70px;width:5px;height:643px;background:#e6e6e6"></div>
<div id="status" class="abs"><span class="abs" style="left:7px;top:4px;color:#222">嵌入式数据库</span><div class="abs" style="left:83px;top:2px;width:1px;height:21px;background:#a9a9a9;border-right:1px solid #e9e9e9;width:2px"></div><div class="abs wm" style="left:882px;top:2px;color:#000"><span class="wml" style="transform:scaleX(.909);width:86px;font-weight:bold;font-size:11px">MyDrivers.com </span><span class="wmc">驱动之家</span></div></div>
<div id="frameL" class="abs"></div>
<div id="frameR" class="abs"></div>
<div id="frameT" class="abs"></div>
<div id="frameB" class="abs"></div>
<div class="abs" style="left:0;top:0;width:2px;height:1px;background:#fff"></div>
<div class="abs" style="left:1022px;top:0;width:2px;height:2px;background:#fff"></div>
<div class="abs" style="left:1021px;top:0;width:1px;height:1px;background:#e0e0e0"></div>
</body>
</html>
